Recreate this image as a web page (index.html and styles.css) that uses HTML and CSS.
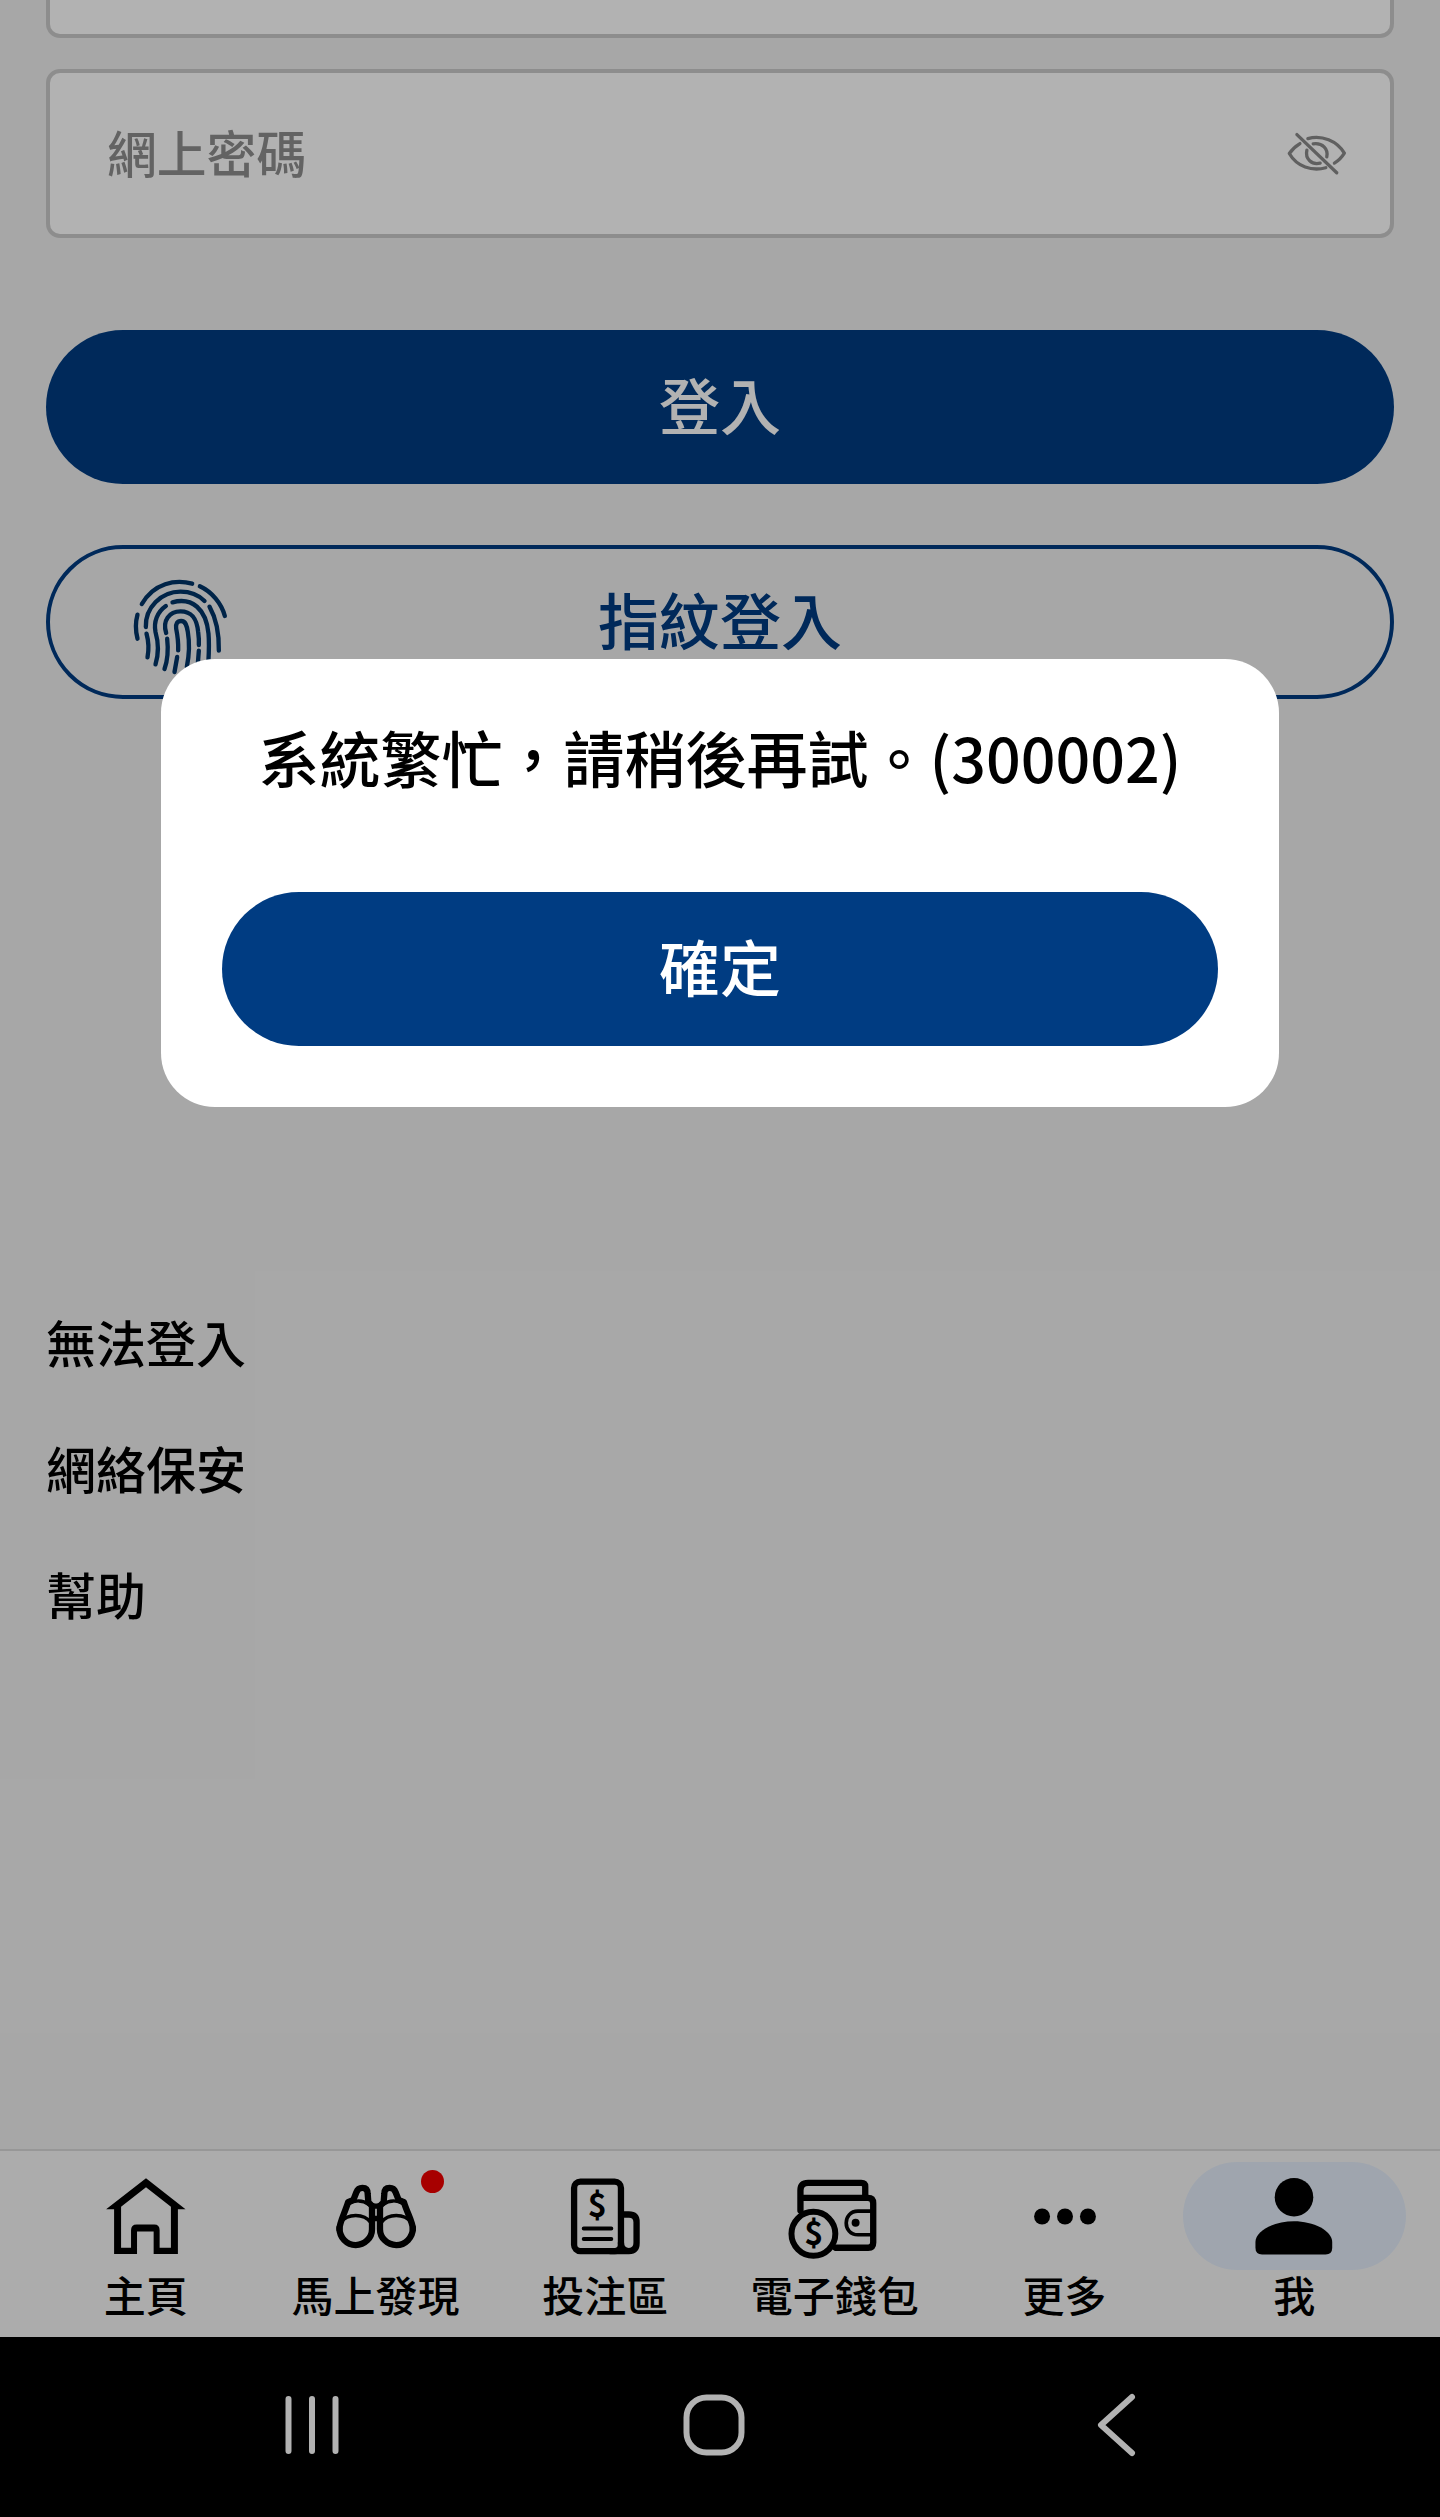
FILE: index.html
```
<!DOCTYPE html>
<html lang="zh-HK">
<head>
  <meta charset="utf-8">
  <title>登入</title>
  <link rel="stylesheet" href="styles.css">
</head>
<body>
  <div class="screen">
    <!-- Login form -->
    <main class="login">
      <div class="field field-account"></div>
      <div class="field">
        <span class="placeholder">網上密碼</span>
        <svg class="eye" viewBox="255 390 190 140">
          <path d="M324 415C366 403 412 422 434 459C426 472 416 482 404 489"/>
          <path d="M300 430C287 438 276 448 268 460C291 500 336 514 378 503"/>
          <path d="M340 431C368 427 386 446 381 470"/>
          <path d="M321 450C315 477 336 495 361 489"/>
          <path d="M291 403L411 518"/>
        </svg>
      </div>
      <button class="btn btn-login">登入</button>
      <button class="btn btn-outline">
        <svg class="fingerprint" viewBox="400 170 290 300">
          <path d="M429 251C465 188 530 176 580 190"/>
          <path d="M603 198C640 215 668 250 678 287"/>
          <path d="M416 283C409 308 410 332 416 355"/>
          <path d="M441 320C439 262 487 214 545 214C575 214 600 225 617 242"/>
          <path d="M632 259C655 300 661 345 660 391"/>
          <path d="M443 340C450 365 450 390 446 411"/>
          <path d="M501 257C475 275 464 305 470 335C480 370 480 400 470 432"/>
          <path d="M521 246C580 230 622 266 629 340C632 375 630 400 628 435"/>
          <path d="M502 338C490 300 512 273 545 273C580 273 594 295 598 335C600 350 601 360 600 374"/>
          <path d="M505 355C509 390 506 420 497 446"/>
          <path d="M600 391L597 430"/>
          <path d="M538 390C539 365 536 345 532 325C530 310 535 302 547 302C560 302 564 315 567 335C573 370 572 400 564 440"/>
          <path d="M535 410L527 455"/>
        </svg>
        指紋登入
      </button>

      <nav class="links">
        <a>無法登入</a>
        <a>網絡保安</a>
        <a>幫助</a>
      </nav>
    </main>

    <!-- Bottom tabs -->
    <nav class="tabs">
      <a class="tab">
        <span class="tab-icon">
          <svg viewBox="93 94 330 328">
            <path fill-rule="evenodd" d="M258 143L377 236H354V371H281V303H231V371H162V236H138ZM258 170L183 229V352H213V299Q213 282 230 282H283Q299 282 299 299V352H333V229Z"/>
          </svg>
        </span>
        <span>主頁</span>
      </a>
      <a class="tab">
        <span class="tab-icon">
          <svg class="line" viewBox="783 94 330 328">
            <path stroke-width="19" d="M838 292C838 322 860 344 887 344C914 344 936 322 936 296V226"/>
            <path stroke-width="19" d="M838 296C838 276 853 250 864 215L880 208L889 185Q894 172 907 172Q923 172 923 190L925 215L936 226"/>
            <path stroke-width="10" d="M842 276C862 248 912 248 932 276M866 220C884 208 908 208 926 222"/>
            <path stroke-width="19" d="M1059 292C1059 322 1036 344 1009 344C982 344 960 322 960 296V226"/>
            <path stroke-width="19" d="M1059 296C1059 276 1043 250 1032 215L1016 208L1007 185Q1002 172 989 172Q973 172 973 190L971 215L960 226"/>
            <path stroke-width="10" d="M1054 276C1034 248 984 248 964 276M1030 220C1012 208 988 208 970 222"/>
            <path stroke-width="16" d="M938 227H958M938 264H958"/>
          </svg>
          <i class="badge"></i>
        </span>
        <span>馬上發現</span>
      </a>
      <a class="tab">
        <span class="tab-icon">
          <svg class="line" viewBox="149 94 330 328">
            <rect stroke-width="19" x="221" y="153" width="141" height="209" rx="19"/>
            <path stroke-width="19" d="M366 252H386Q409 252 409 275V338Q409 362 386 362Q362 362 362 338M330 362H386"/>
            <path stroke-width="12" d="M250 294H333M250 326H333"/>
            <text x="291" y="259" font-size="97">$</text>
          </svg>
        </span>
        <span>投注區</span>
      </a>
      <a class="tab">
        <span class="tab-icon">
          <svg class="line" viewBox="841 94 330 328">
            <path stroke-width="19" d="M902 240V180Q902 157 925 157H1085Q1097 157 1097 168V200"/>
            <path stroke-width="19" d="M904 202H1105Q1121 202 1121 218V336Q1121 352 1106 352H1008"/>
            <path stroke-width="11" d="M1118 242H1075C1028 242 1028 313 1075 313H1118"/>
            <circle class="solid" cx="1068" cy="277" r="12"/>
            <circle stroke-width="18" cx="941" cy="310" r="66"/>
            <text x="942" y="343" font-size="97">$</text>
          </svg>
        </span>
        <span>電子錢包</span>
      </a>
      <a class="tab">
        <span class="tab-icon">
          <svg viewBox="90 94 330 328">
            <circle cx="186" cy="258" r="24"/>
            <circle cx="255" cy="258" r="24"/>
            <circle cx="324" cy="258" r="24"/>
          </svg>
        </span>
        <span>更多</span>
      </a>
      <a class="tab active">
        <span class="tab-icon">
          <svg viewBox="777 94 330 328">
            <circle cx="942" cy="200" r="58"/>
            <path d="M942 272C1000 272 1057 300 1057 335V352Q1057 372 1037 372H846Q826 372 826 352V335C826 300 884 272 942 272Z"/>
          </svg>
        </span>
        <span>我</span>
      </a>
    </nav>

    <!-- Android navigation -->
    <div class="system-nav">
      <svg width="56" height="64" viewBox="0 0 56 64"><path d="M4.500 6V58M28 6V58M51.500 6V58"/></svg>
      <svg width="64" height="64" viewBox="0 0 64 64"><rect x="4.500" y="4.500" width="55" height="55" rx="20"/></svg>
      <svg width="44" height="66" viewBox="0 0 44 66"><path d="M38 5L7 33L38 61"/></svg>
    </div>

    <!-- Error dialog -->
    <div class="overlay">
      <div class="dialog">
        <p class="message">系統繁忙，請稍後再試。(300002)</p>
        <button class="btn">確定</button>
      </div>
    </div>
  </div>
</body>
</html>
```

FILE: styles.css
```
* {
  box-sizing: border-box;
}
body {
  margin: 0;
  font-family: "Noto Sans CJK TC", sans-serif;
  font-weight: 500;
  color: #000;
}
.screen {
  position: relative;
  display: flex;
  flex-direction: column;
  height: 2517px;
  background: #f0f0f0;
  overflow: hidden;
}
/* Login form */
.login {
  flex: 1;
  padding: 0 46px;
}
.field {
  display: flex;
  align-items: center;
  justify-content: space-between;
  height: 169px;
  padding: 0 42px 0 57px;
  margin-bottom: 92px;
  border: 4px solid #cbcbcb;
  border-radius: 14px;
  background: #fff;
}
.field-account {
  height: 38px;
  margin-bottom: 31px;
  border-top: none;
  border-radius: 0 0 14px 14px;
}
.placeholder {
  padding-bottom: 6px;
  font-size: 49.8px;
  line-height: 60px;
  color: #8f8f8f;
}
svg {
  display: block;
}
.eye {
  width: 63px;
  height: 47px;
  fill: none;
  stroke: #8a8a8a;
  stroke-width: 10;
  stroke-linecap: round;
  stroke-linejoin: round;
}
/* Buttons */
.btn {
  display: flex;
  align-items: center;
  justify-content: center;
  width: 100%;
  height: 154px;
  padding: 0 0 6px;
  border: none;
  border-radius: 77px;
  background: #003c82;
  color: #fff;
  font-family: inherit;
  font-size: 61px;
  font-weight: 500;
  line-height: 80px;
}
.btn-login {
  margin-bottom: 61px;
}
.btn-outline {
  position: relative;
  border: 4px solid #003c82;
  background: none;
  color: #003c82;
}
.fingerprint {
  position: absolute;
  left: 82px;
  top: 28px;
  width: 97px;
  height: 100px;
  fill: none;
  stroke: #003468;
  stroke-width: 13;
  stroke-linecap: round;
}
.links {
  display: flex;
  flex-direction: column;
  margin-top: 579px;
  font-size: 50px;
  line-height: 126px;
}
/* Bottom tabs */
.tabs {
  display: flex;
  height: 188px;
  padding: 11px 31px 0;
  border-top: 2px solid #d8d8d8;
  background: #f7f7f7;
}
.tab {
  flex: 1;
  display: flex;
  flex-direction: column;
  align-items: center;
  font-size: 42px;
  line-height: 48px;
}
.tab-icon {
  position: relative;
  display: flex;
  justify-content: center;
  width: 223px;
  height: 108px;
  border-radius: 54px;
}
.tab-icon svg {
  width: 110px;
  height: 109px;
}
.active .tab-icon {
  background: #e4edf9;
}
.line {
  fill: none;
  stroke: #000;
  stroke-linecap: round;
  stroke-linejoin: round;
}
.line text {
  fill: #000;
  stroke: none;
  font-weight: 700;
  text-anchor: middle;
}
.solid {
  fill: #000;
  stroke: none;
}
.badge {
  position: absolute;
  left: 157px;
  top: 8px;
  width: 23px;
  height: 23px;
  border-radius: 50%;
  background: #f00000;
}
/* Android navigation */
.system-nav {
  display: grid;
  grid-template-columns: repeat(3, 1fr);
  align-items: center;
  justify-items: center;
  height: 180px;
  padding: 0 123px 5px 111px;
  background: #000;
}
.system-nav svg {
  fill: none;
  stroke: #fff;
  stroke-width: 6;
  stroke-linecap: round;
  stroke-linejoin: round;
}
/* Error dialog */
.overlay {
  position: absolute;
  inset: 0;
  display: flex;
  flex-direction: column;
  align-items: center;
  padding-top: 659px;
  background: rgba(0, 0, 0, 0.3);
}
.dialog {
  width: 1118px;
  height: 448px;
  padding: 58px 61px 61px;
  border-radius: 54px;
  background: #fff;
}
.message {
  margin: 0 0 95px;
  font-size: 61px;
  line-height: 80px;
  text-align: center;
  white-space: nowrap;
}
```
